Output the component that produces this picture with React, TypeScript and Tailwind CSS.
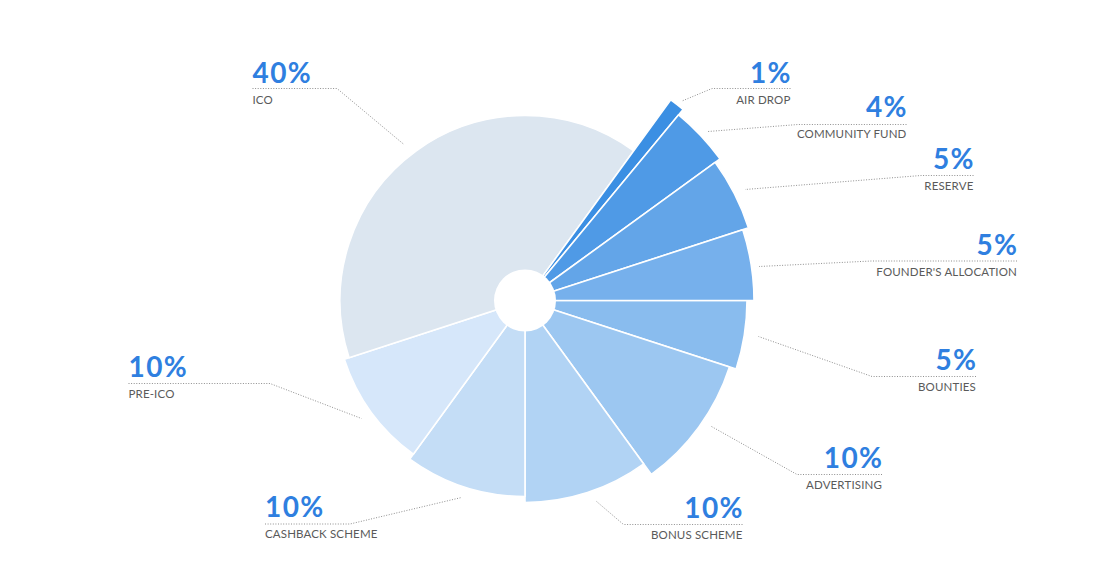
const CX = 525
const CY = 300.5
const HOLE = 31

type Slice = {
  label: string
  pct: number
  start: number
  r: number
  fill: string
}

// angles are degrees clockwise from east (screen coords)
const SLICES: Slice[] = [
  { label: 'BOUNTIES', pct: 5, start: 0, r: 222, fill: '#89bcee' },
  { label: 'ADVERTISING', pct: 10, start: 18, r: 215, fill: '#9cc7f1' },
  { label: 'BONUS SCHEME', pct: 10, start: 54, r: 202, fill: '#b1d3f4' },
  { label: 'CASHBACK SCHEME', pct: 10, start: 90, r: 196, fill: '#c4ddf6' },
  { label: 'PRE-ICO', pct: 10, start: 126, r: 190, fill: '#d6e7fa' },
  { label: 'ICO', pct: 40, start: 162, r: 185, fill: '#dce6f0' },
  { label: 'AIR DROP', pct: 1, start: 306, r: 248, fill: '#3b8fe3' },
  { label: 'COMMUNITY FUND', pct: 4, start: 309.6, r: 241, fill: '#4f9ae6' },
  { label: 'RESERVE', pct: 5, start: 324, r: 235, fill: '#63a5e8' },
  { label: "FOUNDER'S ALLOCATION", pct: 5, start: 342, r: 229, fill: '#76b0ec' },
]

type Callout = {
  pct: string
  label: string
  align: 'start' | 'end'
  x: number // text anchor x
  y: number // baseline of percentage
  line: [number, number][]
}

const CALLOUTS: Callout[] = [
  { pct: '40%', label: 'ICO', align: 'start', x: 252.5, y: 82.5, line: [[252.5, 88.5], [337, 88.5], [404, 144.5]] },
  { pct: '1%', label: 'AIR DROP', align: 'end', x: 790.5, y: 82.5, line: [[790.5, 88.5], [712, 88.5], [682, 101]] },
  { pct: '4%', label: 'COMMUNITY FUND', align: 'end', x: 906.5, y: 117, line: [[906.5, 124.5], [798, 124.5], [708, 131.5]] },
  { pct: '5%', label: 'RESERVE', align: 'end', x: 973.5, y: 169, line: [[973.5, 175.5], [921, 175.5], [745, 189.5]] },
  { pct: '5%', label: "FOUNDER'S ALLOCATION", align: 'end', x: 1017, y: 254.5, line: [[1017, 261], [871.5, 261], [759, 266.5]] },
  { pct: '5%', label: 'BOUNTIES', align: 'end', x: 976, y: 370, line: [[976, 376.5], [872, 376.5], [758.5, 336.5]] },
  { pct: '10%', label: 'ADVERTISING', align: 'end', x: 882, y: 468, line: [[882, 474.5], [797, 474.5], [711.5, 426.5]] },
  { pct: '10%', label: 'BONUS SCHEME', align: 'end', x: 742.5, y: 518, line: [[742.5, 524.5], [623.5, 524.5], [596, 501]] },
  { pct: '10%', label: 'CASHBACK SCHEME', align: 'start', x: 265, y: 517, line: [[265, 524], [350, 524], [461.5, 497.5]] },
  { pct: '10%', label: 'PRE-ICO', align: 'start', x: 128.5, y: 377, line: [[128.5, 383.5], [270, 383.5], [361.5, 418.5]] },
]

function pt(deg: number, r: number) {
  const a = (deg * Math.PI) / 180
  return [CX + r * Math.cos(a), CY + r * Math.sin(a)]
}

function sectorPath(s: Slice) {
  const sweep = s.pct * 3.6
  const [x1, y1] = pt(s.start, s.r)
  const [x2, y2] = pt(s.start + sweep, s.r)
  const large = sweep > 180 ? 1 : 0
  return `M ${CX} ${CY} L ${x1} ${y1} A ${s.r} ${s.r} 0 ${large} 1 ${x2} ${y2} Z`
}

export default function App() {
  return (
    <main className="w-[1115px] h-[585px] bg-white overflow-hidden">
      <svg width={1115} height={585} viewBox="0 0 1115 585" className="block">
        {SLICES.map((s) => (
          <path key={s.label} d={sectorPath(s)} fill={s.fill} stroke="#ffffff" strokeWidth={1.6} strokeLinejoin="round" />
        ))}
        <circle cx={CX} cy={CY} r={HOLE} fill="#ffffff" />

        {CALLOUTS.map((c) => (
          <g key={c.label}>
            <polyline
              points={c.line.map((p) => p.join(',')).join(' ')}
              fill="none"
              stroke="#8f8f8f"
              strokeWidth={1}
              strokeDasharray="1 1.6"
            />
            <text
              x={c.align === 'end' ? c.x + 1.4 : c.x}
              y={c.y}
              textAnchor={c.align}
              fill="#2f7fe0"
              fontFamily="Lato, 'Open Sans', sans-serif"
              fontWeight={700}
              fontSize={28}
              letterSpacing={1.4}
            >
              {c.pct}
            </text>
            <text
              x={c.x}
              y={c.y + 21}
              textAnchor={c.align}
              fill="#5a5a5a"
              fontFamily="Lato, 'Open Sans', sans-serif"
              fontSize={11.5}
              letterSpacing={0.15}
            >
              {c.label}
            </text>
          </g>
        ))}
      </svg>
    </main>
  )
}
